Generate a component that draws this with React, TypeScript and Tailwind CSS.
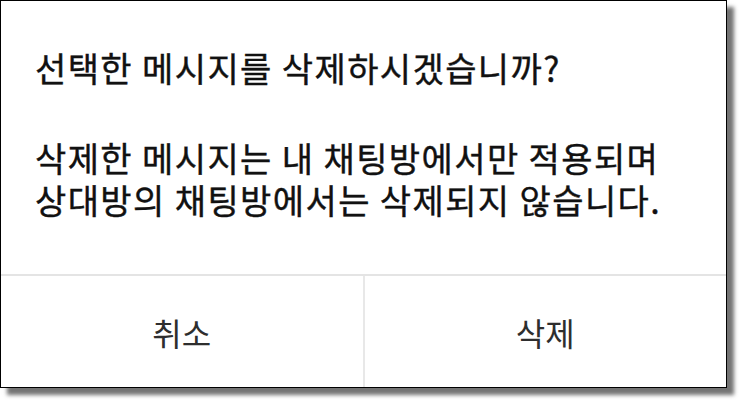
export default function App() {
  return (
    <div
      className="w-[739px] h-[400px] bg-white overflow-hidden"
      style={{ fontFamily: '"Noto Sans CJK KR", "Noto Sans", sans-serif' }}
    >
      <div className="w-[727px] h-[388px] border border-black bg-white shadow-[7px_7px_4px_rgba(0,0,0,0.55)] flex flex-col">
        <div className="h-[273px] pl-[34px] pt-[46px] text-[34px] leading-[42px] text-[#111111] tracking-[1.4px] [-webkit-text-stroke:0.4px_#111111]">
          <p>선택한 메시지를 삭제하시겠습니까?</p>
          <p className="mt-[48px]">삭제한 메시지는 내 채팅방에서만 적용되며</p>
          <p>상대방의 채팅방에서는 삭제되지 않습니다.</p>
        </div>
        <div className="h-[2px] bg-[#e4e4e4]" />
        <div className="flex flex-1 text-[32px] text-[#2e2e2e]">
          <button className="flex-1 flex items-center justify-center">취소</button>
          <div className="w-[2px] bg-[#e8e8e8]" />
          <button className="flex-1 flex items-center justify-center">삭제</button>
        </div>
      </div>
    </div>
  );
}
